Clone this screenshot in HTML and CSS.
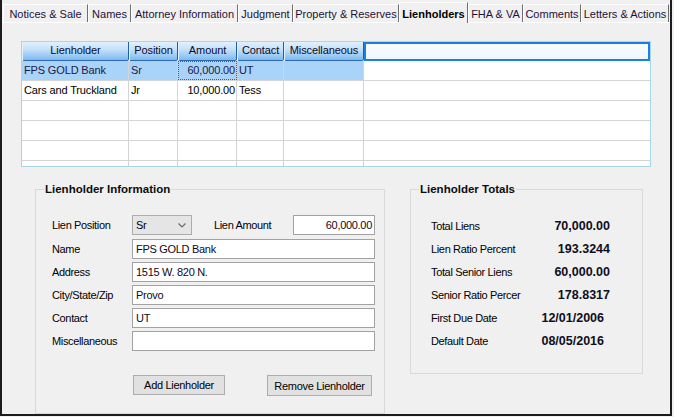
FILE: index.html
```html
<!DOCTYPE html>
<html>
<head>
<meta charset="utf-8">
<title>Lienholders</title>
<link rel="stylesheet" href="styles.css">
</head>
<body>
<div class="frame">
  <div class="tabs">
    <div class="tab t-notices">Notices &amp; Sale</div>
    <div class="tab t-names">Names</div>
    <div class="tab t-attorney">Attorney Information</div>
    <div class="tab t-judgment">Judgment</div>
    <div class="tab t-property">Property &amp; Reserves</div>
    <div class="tab t-lien active">Lienholders</div>
    <div class="tab t-fha">FHA &amp; VA</div>
    <div class="tab t-comments">Comments</div>
    <div class="tab t-letters">Letters &amp; Actions</div>
  </div>
  <div class="panel">
    <div class="grid">
      <div class="row head">
        <div class="hc">Lienholder</div>
        <div class="hc">Position</div>
        <div class="hc">Amount</div>
        <div class="hc">Contact</div>
        <div class="hc">Miscellaneous</div>
        <div class="hc fill"></div>
      </div>
      <div class="row sel">
        <div class="c">FPS GOLD Bank</div>
        <div class="c">Sr</div>
        <div class="c num focus">60,000.00</div>
        <div class="c">UT</div>
        <div class="c"></div>
        <div class="c fill"></div>
      </div>
      <div class="row">
        <div class="c">Cars and Truckland</div>
        <div class="c">Jr</div>
        <div class="c num">10,000.00</div>
        <div class="c">Tess</div>
        <div class="c"></div>
        <div class="c fill"></div>
      </div>
      <div class="row"><div class="c"></div><div class="c"></div><div class="c"></div><div class="c"></div><div class="c"></div><div class="c fill"></div></div>
      <div class="row"><div class="c"></div><div class="c"></div><div class="c"></div><div class="c"></div><div class="c"></div><div class="c fill"></div></div>
      <div class="row"><div class="c"></div><div class="c"></div><div class="c"></div><div class="c"></div><div class="c"></div><div class="c fill"></div></div>
      <div class="row"><div class="c"></div><div class="c"></div><div class="c"></div><div class="c"></div><div class="c"></div><div class="c fill"></div></div>
    </div>

    <div class="lower">
      <fieldset class="group info">
        <legend>Lienholder Information</legend>
        <div class="group-body info-body">
          <div class="frow first">
            <span class="lbl">Lien Position</span>
            <div class="select"><span>Sr</span>
              <svg class="chev" width="8" height="5" viewBox="0 0 8 5"><path d="M0.5 0.5 L4 4 L7.5 0.5" fill="none" stroke="#6a6a6a" stroke-width="1.2"/></svg>
            </div>
            <span class="lbl amt-lbl">Lien Amount</span>
            <div class="input amt">60,000.00</div>
          </div>
          <div class="frow"><span class="lbl">Name</span><div class="input wide">FPS GOLD Bank</div></div>
          <div class="frow"><span class="lbl">Address</span><div class="input wide">1515 W. 820 N.</div></div>
          <div class="frow"><span class="lbl">City/State/Zip</span><div class="input wide">Provo</div></div>
          <div class="frow"><span class="lbl">Contact</span><div class="input wide">UT</div></div>
          <div class="frow"><span class="lbl">Miscellaneous</span><div class="input wide"></div></div>
          <div class="buttons">
            <div class="btn add">Add Lienholder</div>
            <div class="btn remove">Remove Lienholder</div>
          </div>
        </div>
      </fieldset>

      <fieldset class="group totals">
        <legend>Lienholder Totals</legend>
        <div class="group-body totals-body">
          <div class="trow"><span class="tl">Total Liens</span><span class="tv">70,000.00</span></div>
          <div class="trow"><span class="tl">Lien Ratio Percent</span><span class="tv">193.3244</span></div>
          <div class="trow"><span class="tl">Total Senior Liens</span><span class="tv">60,000.00</span></div>
          <div class="trow"><span class="tl">Senior Ratio Percer</span><span class="tv">178.8317</span></div>
          <div class="trow"><span class="tl">First Due Date</span><span class="tv date">12/01/2006</span></div>
          <div class="trow"><span class="tl">Default Date</span><span class="tv date">08/05/2016</span></div>
        </div>
      </fieldset>
    </div>
  </div>
</div>
</body>
</html>
```

FILE: styles.css
```css
html, body {
  margin: 0;
  background: #f0f0f0;
}

body {
  font-family: "Liberation Sans", Arial, sans-serif;
  font-size: 11px;
  color: #000;
}

.frame {
  width: 672px;
  height: 416px;
  box-sizing: border-box;
  border-left: 2px solid #1c1c1c;
  border-right: 2px solid #1c1c1c;
  border-bottom: 2px solid #1c1c1c;
  display: flex;
  flex-direction: column;
}

/* ---------- tabs ---------- */
.tabs {
  height: 22px;
  display: flex;
  align-items: flex-end;
  padding-left: 1px;
}

.tab {
  box-sizing: border-box;
  height: 18px;
  border-top: 1px solid #ffffff;
  border-left: 1px solid #ffffff;
  border-right: 1px solid #6e6e6e;
  display: flex;
  align-items: center;
  justify-content: center;
  white-space: nowrap;
  color: #1c1238;
  padding-top: 1px;
}

.tab.active {
  height: 21px;
  margin-bottom: -1px;
  position: relative;
  z-index: 1;
  background: #f0f0f0;
  font-weight: bold;
  color: #000;
}

.t-notices { width: 85px; }
.t-names { width: 43px; }
.t-attorney { width: 107px; }
.t-judgment { width: 55px; }
.t-property { width: 106px; }
.t-lien { width: 69px; }
.t-fha { width: 55px; }
.t-comments { width: 58px; }
.t-letters { width: 88px; }

/* ---------- panel ---------- */
.panel {
  flex: 1;
  border-top: 1px solid #ffffff;
  padding: 18px 0 0 19px;
}

/* ---------- grid ---------- */
.grid {
  width: 630px;
  height: 126px;
  box-sizing: border-box;
  border: 1px solid #a6d6e8;
  background: #ffffff;
  overflow: hidden;
}

.row {
  display: grid;
  grid-template-columns: 107px 49px 59px 47px 80px 286px;
  height: 20px;
  box-sizing: border-box;
  border-bottom: 1px solid #d4d4d4;
}

.row.head {
  height: 19px;
  border-bottom: 0;
}

.hc {
  box-sizing: border-box;
  border-right: 1px solid #1f5fa8;
  border-bottom: 1px solid #2a68b0;
  border-left: 1px solid #e2f0fd;
  border-radius: 0 0 2px 2px;
  background: linear-gradient(to bottom, #e2f0fd 0%, #c6e1fa 40%, #a4cef5 70%, #7db9ef 100%);
  text-align: center;
  line-height: 17px;
  color: #0a0a2a;
  white-space: nowrap;
  overflow: hidden;
  letter-spacing: -0.1px;
}

.hc.fill {
  border: 0;
  border-radius: 0;
  background: linear-gradient(to bottom, #fafcff, #eef6fe);
  box-shadow: inset 0 0 0 2px #1a80e4;
}

.c {
  box-sizing: border-box;
  border-right: 1px solid #d4d4d4;
  padding: 0 2px;
  line-height: 19px;
  white-space: nowrap;
  overflow: hidden;
  letter-spacing: -0.15px;
}

.c.fill {
  border-right: 0;
}

.c.num {
  text-align: right;
  padding-right: 1px;
}

.row.sel .c {
  background: #a9d3f8;
  color: #1c1848;
}

.row.sel .c.fill {
  background: #ffffff;
}

.c.focus {
  outline: 1px dotted #5a5a5a;
  outline-offset: -1px;
}

/* ---------- lower area ---------- */
.lower {
  display: flex;
  align-items: flex-start;
  gap: 25px;
  margin-top: 15px;
  padding-left: 14px;
}

.group {
  margin: 0;
  padding: 0;
  min-width: 0;
  box-sizing: border-box;
  border: 1px solid #d9d9d9;
}

.group legend {
  margin-left: 8px;
  padding: 0 1px;
  font-weight: bold;
  font-size: 11.5px;
  line-height: 14px;
  color: #0c0c0c;
}

.info {
  width: 350px;
  height: 232px;
}

.totals {
  width: 233px;
  height: 192px;
}

.info-body {
  padding: 19px 0 0 16px;
}

.totals-body {
  padding: 18px 32px 0 20px;
}

/* form rows */
.frow {
  display: flex;
  align-items: center;
  height: 20px;
  margin-bottom: 3px;
}

.frow.first {
  height: 21px;
  align-items: flex-start;
}

.frow.first .lbl {
  line-height: 20px;
}

.lbl {
  width: 80px;
  flex: none;
  letter-spacing: -0.35px;
  white-space: nowrap;
}

.amt-lbl {
  width: 79px;
  margin-left: 22px;
}

.select {
  box-sizing: border-box;
  width: 60px;
  height: 20px;
  border: 1px solid #acacac;
  background: #e5e5e5;
  display: flex;
  align-items: center;
  justify-content: space-between;
  padding: 0 5px 0 3px;
  letter-spacing: -0.3px;
}

.chev {
  display: block;
}

.input {
  box-sizing: border-box;
  height: 20px;
  border: 1px solid #a2a2a2;
  background: #ffffff;
  line-height: 18px;
  padding: 0 3px;
  white-space: nowrap;
  letter-spacing: -0.3px;
  color: #100820;
}

.input.wide {
  width: 243px;
}

.input.amt {
  width: 82px;
  text-align: right;
  padding-right: 2px;
}

.buttons {
  display: flex;
  align-items: flex-start;
  margin-top: 24px;
}

.btn {
  box-sizing: border-box;
  height: 20px;
  border: 1px solid #adadad;
  background: #e1e1e1;
  display: flex;
  align-items: center;
  justify-content: center;
  letter-spacing: -0.3px;
  white-space: nowrap;
}

.btn.add {
  width: 92px;
  margin-left: 81px;
}

.btn.remove {
  width: 105px;
  height: 21px;
  margin-left: 42px;
}

/* totals */
.trow {
  display: flex;
  align-items: center;
  justify-content: space-between;
  height: 23px;
}

.tl {
  letter-spacing: -0.35px;
  white-space: nowrap;
}

.tv {
  font-weight: bold;
  font-size: 12.5px;
  color: #0e0e1e;
}

.tv.date {
  margin-right: 6px;
}
```
